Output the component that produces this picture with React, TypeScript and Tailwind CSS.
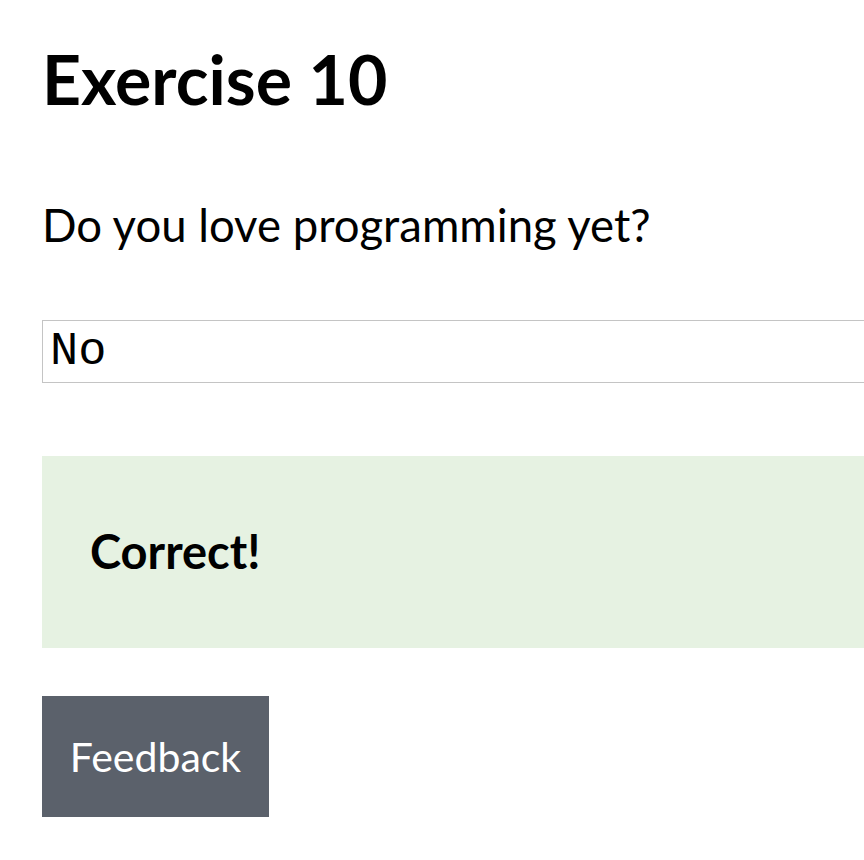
import React from 'react';

const sans = { fontFamily: 'Lato, "Open Sans", sans-serif' };

export default function App() {
  return (
    <div className="min-h-screen w-full overflow-hidden bg-white text-black" style={sans}>
      <div className="pl-[42px]">
        <h1 className="pt-[45px] text-[68px] font-bold leading-none">Exercise 10</h1>

        <p className="mt-[89px] text-[45.5px] leading-none">Do you love programming yet?</p>

        <div className="mt-[72px] w-[calc(100%+40px)]">
          <input
            type="text"
            defaultValue="No"
            className="block h-[63px] w-full border border-[#c4c4c4] bg-white pl-[7px] pt-[3px] text-[47px] text-black outline-none"
            style={{ fontFamily: '"Liberation Mono", "Courier New", monospace' }}
          />
        </div>

        <div className="mt-[73px] flex h-[192px] w-[calc(100%+40px)] items-center bg-[#e6f2e2] pl-[48px]">
          <strong className="text-[47px] font-bold leading-none">Correct!</strong>
        </div>

        <button className="mt-[48px] flex h-[121px] w-[227px] items-center justify-center bg-[#5b616b] text-[41px] leading-none text-white">
          Feedback
        </button>
      </div>
    </div>
  );
}
